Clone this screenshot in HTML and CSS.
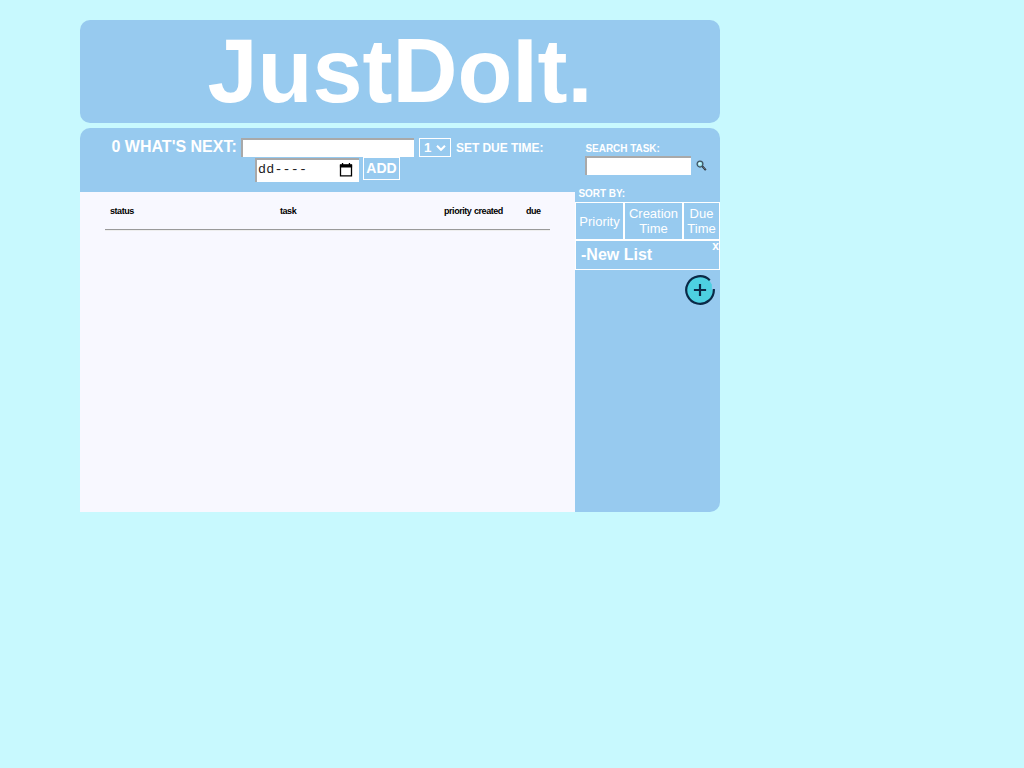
FILE: index.html
```html
<!DOCTYPE html>
<html lang="en">
<head>
<meta charset="utf-8">
<title>JustDoIt.</title>
<link rel="stylesheet" href="styles.css">
</head>
<body>
<div class="app">
  <header class="title">JustDoIt.</header>
  <div class="board">
    <main class="main">
      <form class="entry">
        <div class="row first">
          <span class="next">0 WHAT'S NEXT:</span>
          <input class="field task-input" type="text" aria-label="Task">
          <div class="select"><span>1</span><svg width="10" height="6" viewBox="0 0 10 6"><path d="M1 .8 5 4.8 9 .8" fill="none" stroke="#fff" stroke-width="2.1"/></svg></div>
          <span class="due-label">SET DUE TIME:</span>
        </div>
        <div class="row second">
          <div class="field date"><span>dd----</span>
            <svg width="14" height="14" viewBox="0 0 14 14"><path d="M1.5 2.5h11v10.3h-11z" fill="none" stroke="#000" stroke-width="1.3"/><path d="M.9 1.2h12.2v3.3H.9zM2.9 0h1.3v2H2.9zM9.8 0h1.3v2H9.8z"/></svg>
          </div>
          <button class="add" type="button">ADD</button>
        </div>
      </form>
      <section class="list">
        <div class="columns"><span>status</span><span>task</span><span>priority</span><span>created</span><span>due</span></div>
        <hr class="rule">
      </section>
    </main>
    <aside class="side">
      <div class="search">
        <label class="small-label" for="search">SEARCH TASK:</label>
        <div class="search-row">
          <input class="field search-input" id="search" type="text">
          <svg width="12" height="12" viewBox="0 0 12 12"><path d="M6.2 6.2 9.8 10.2" stroke="#26323c" stroke-width="2"/><path d="M7 6.8 9.4 9.4" stroke="#8b8f93" stroke-width=".7"/><circle cx="4" cy="4.1" r="2.9" fill="#9be3ef" stroke="#3f5361" stroke-width="1.3"/><circle cx="3.6" cy="3.6" r="1.1" fill="#e9feff"/></svg>
        </div>
      </div>
      <div class="small-label sort-label">SORT BY:</div>
      <div class="sort">
        <button class="p" type="button">Priority</button>
        <button class="c" type="button">Creation Time</button>
        <button class="d" type="button">Due Time</button>
      </div>
      <div class="list-item"><span>-New List</span><span class="close">x</span></div>
      <svg class="plus" width="30" height="30" viewBox="0 0 30 30"><path d="M15 15 25.3 5.5A14 14 0 1 0 28.8 15z" fill="#4dd0e1"/><path d="M15 15 24.4 5.6 26.8 9.5 26.8 15z" fill="#4dd0e1"/><path d="M24.76 5.24A13.8 13.8 0 1 0 28.8 14" fill="none" stroke="#0b2947" stroke-width="2.2"/><path d="M15 8.9v12.2M8.9 15h12.2" stroke="#0b2947" stroke-width="2.2"/></svg>
    </aside>
  </div>
</div>
</body>
</html>
```
FILE: styles.css
```css
* { box-sizing: border-box; }
body {
  margin: 0;
  background: #c8f9fe;
  font-family: "Liberation Sans", Arial, sans-serif;
  color: #fff;
}
.app { width: 640px; margin: 20px 0 0 80px; }
.title {
  height: 103px;
  border-radius: 10px;
  background: #97caef;
  font-size: 90px;
  line-height: 103px;
  font-weight: bold;
  text-align: center;
}
.board {
  display: flex;
  height: 384px;
  margin-top: 5px;
  border-radius: 10px 10px 10px 0;
  background: #97caef;
  overflow: hidden;
}
.main { width: 495px; }
.entry { height: 64px; padding-top: 10px; }
.row { display: flex; align-items: flex-start; }
.first { height: 19px; padding-left: 31px; }
.next { width: 130px; padding-left: .5px; font-size: 16px; line-height: 18px; font-weight: bold; white-space: nowrap; }
.field {
  border: 0 solid #a9a9a9;
  border-top-width: 2px;
  border-left-width: 2px;
  border-radius: 0;
  background: #fff;
  padding: 0;
}
.task-input { width: 173px; height: 19px; }
.select {
  display: flex;
  align-items: center;
  justify-content: space-between;
  width: 32px;
  height: 19px;
  margin-left: 5px;
  padding: 0 4px;
  border: 1px solid #fff;
  font-size: 13.33px;
  font-weight: bold;
}
.due-label { margin-left: 5px; font-size: 12px; line-height: 20px; font-weight: bold; letter-spacing: -.05px; }
.second { padding-left: 175px; }
.date {
  display: flex;
  justify-content: space-between;
  width: 104px;
  height: 24px;
  margin-top: 1px;
  padding: 3px 6px 0 1px;
  color: #222;
  font: 13.33px/13px "Liberation Mono", monospace;
  letter-spacing: .2px;
}
button {
  border: 1px solid #fff;
  border-radius: 0;
  background: none;
  color: #fff;
  font: 13.33px/15px "Liberation Sans", Arial, sans-serif;
  padding: 0;
}
.sort button { font-size: 13px; }
.add { width: 37px; height: 23px; margin-left: 4px; font-size: 14px; font-weight: bold; }
.list { height: 320px; padding: 14px 25px 0; background: #f8f8ff; }
.columns {
  display: grid;
  grid-template-columns: 170px 164px 30px 52px auto;
  height: 23px;
  padding-left: 5px;
  color: #000;
  font-size: 9px;
  line-height: 11px;
  font-weight: bold;
  letter-spacing: -.45px;
}
.rule { height: 2px; margin: 0; border: 0; border-top: 1px solid #9a9a9a; border-bottom: 1px solid #eee; }
.side { width: 145px; }
.search { height: 57px; padding: 15px 0 0 10px; }
.small-label { display: block; font-size: 10px; line-height: 11px; font-weight: bold; padding-left: .5px; letter-spacing: -.05px; }
.search-row { display: flex; align-items: center; gap: 5px; margin-top: 2px; }
.search-input { width: 106px; height: 19px; }
.sort-label { height: 17px; padding: 3px 0 0 3.5px; }
.sort { display: flex; height: 38px; }
.p { width: 49px; }
.c { width: 59px; }
.d { width: 37px; }
.list-item {
  display: flex;
  justify-content: space-between;
  height: 30px;
  padding-left: 5px;
  border: 1px solid #fff;
  font-size: 16px;
  line-height: 28px;
  font-weight: bold;
}
.close { font-size: 12px; line-height: 11px; }
.plus { display: block; margin: 5px 5px 0 auto; }
```
